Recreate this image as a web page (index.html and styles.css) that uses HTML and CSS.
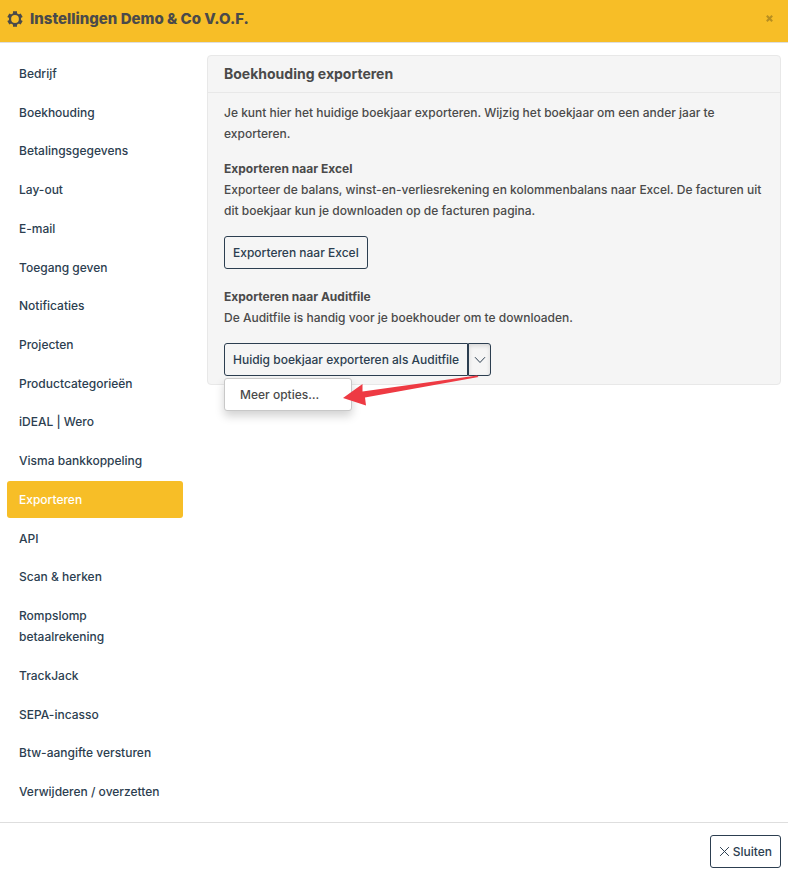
FILE: index.html
```html
<!DOCTYPE html>
<html lang="nl">
<head>
<meta charset="utf-8">
<meta name="viewport" content="width=device-width, initial-scale=1">
<title>Instellingen</title>
<link rel="stylesheet" href="styles.css">
</head>
<body>
<header class="header">
  <svg class="gear" viewBox="0 0 16 16" aria-hidden="true"><g fill="none" stroke="currentColor"><circle cx="8" cy="8" r="5" stroke-width="2.2"/><path stroke-width="4" d="M8 .3V3M8 13V15.700M1.330 4.150 3.670 5.500M12.330 10.500 14.670 11.850M1.330 11.850 3.670 10.500M12.330 5.500 14.670 4.150"/></g></svg>
  <h1 class="title">Instellingen Demo &amp; Co V.O.F.</h1>
  <button class="close" type="button" aria-label="Sluiten"><svg viewBox="0 0 6 6" aria-hidden="true"><path d="M.7.7 5.3 5.3M5.3.7.7 5.3" stroke="currentColor" stroke-width="1.8"/></svg></button>
</header>
<main class="main">
  <nav class="nav">
    <a href="#">Bedrijf</a>
    <a href="#">Boekhouding</a>
    <a href="#">Betalingsgegevens</a>
    <a href="#">Lay-out</a>
    <a href="#">E-mail</a>
    <a href="#">Toegang geven</a>
    <a href="#">Notificaties</a>
    <a href="#">Projecten</a>
    <a href="#">Productcategorieën</a>
    <a href="#">iDEAL | Wero</a>
    <a href="#">Visma bankkoppeling</a>
    <a href="#" class="active">Exporteren</a>
    <a href="#">API</a>
    <a href="#">Scan &amp; herken</a>
    <a href="#">Rompslomp<br>betaalrekening</a>
    <a href="#">TrackJack</a>
    <a href="#">SEPA-incasso</a>
    <a href="#">Btw-aangifte versturen</a>
    <a href="#">Verwijderen / overzetten</a>
  </nav>
  <section class="panel">
    <h2 class="panel-title">Boekhouding exporteren</h2>
    <div class="panel-body">
      <p class="intro">Je kunt hier het huidige boekjaar exporteren. Wijzig het boekjaar om een ander jaar te exporteren.</p>
      <h3>Exporteren naar Excel</h3>
      <p>Exporteer de balans, winst-en-verliesrekening en kolommenbalans naar Excel. De facturen uit dit boekjaar kun je downloaden op de facturen pagina.</p>
      <button class="btn excel" type="button">Exporteren naar Excel</button>
      <h3>Exporteren naar Auditfile</h3>
      <p>De Auditfile is handig voor je boekhouder om te downloaden.</p>
      <div class="group">
        <button class="btn audit" type="button">Huidig boekjaar exporteren als Auditfile</button>
        <button class="btn toggle" type="button" aria-label="Meer"><svg viewBox="0 0 12 8" aria-hidden="true"><path d="M1 1.2 6 6.5 11 1.2" fill="none" stroke="currentColor"/></svg></button>
        <div class="menu"><a href="#">Meer opties…</a></div>
        <svg class="arrow" viewBox="0 0 140 34" aria-hidden="true"><path fill="#ee3a43" d="M0 23 19.500 9V16.500L134 .5 135.500 2 22 22.500 23 30.500Z"/></svg>
      </div>
    </div>
  </section>
</main>
<footer class="footer">
  <button class="btn sluiten" type="button"><svg viewBox="0 0 10 10" aria-hidden="true"><path d="M1 1 9 9M9 1 1 9" stroke="currentColor" stroke-width=".9"/></svg>Sluiten</button>
</footer>
</body>
</html>
```

FILE: styles.css
```css
* { box-sizing: border-box; }
body {
  margin: 0;
  min-height: 100vh;
  display: flex;
  flex-direction: column;
  background: #fff;
  color: #4a4a4a;
  font: 500 12px/21px Inter, "Open Sans", sans-serif;
}
h1, h2, h3, p { margin: 0; }
a { color: #2c3e50; text-decoration: none; }
button { font: inherit; cursor: pointer; }
.header {
  display: flex;
  align-items: center;
  height: 43px;
  padding: 0 15px 5px 7px;
  background: #f7be27;
  border-bottom: 1px solid #dedede;
}
.gear { width: 16px; height: 16px; margin-right: 7px; }
.title { font-size: 15px; line-height: 21px; font-weight: 800; }
.close {
  margin-left: auto;
  padding: 0;
  border: 0;
  background: none;
  color: #b88f20;
  line-height: 0;
}
.close svg { width: 7px; height: 7px; }
.main {
  flex: 1;
  display: flex;
  align-items: stretch;
  gap: 24px;
  padding: 12px 7px;
}
.nav {
  flex: 0 0 176px;
  display: flex;
  flex-direction: column;
  justify-content: space-between;
}
.nav a { padding: 8px 12px; border-radius: 3px; }
.nav .active { background: #f7be27; color: #fff; }
.panel {
  flex: 1;
  align-self: flex-start;
  border: 1px solid #e8e8e8;
  border-radius: 4px;
  background: #f5f5f5;
}
.panel-title {
  padding: 8px 16px;
  border-bottom: 1px solid #e8e8e8;
  font-size: 14px;
  line-height: 20px;
  font-weight: 700;
}
.panel-body { padding: 9px 16px 8px; }
.intro { margin-bottom: 14px; }
h3 { font-size: 12px; line-height: 21px; font-weight: 700; }
.btn {
  height: 33px;
  padding: 0 8px;
  border: 1px solid #2c3e50;
  border-radius: 3px;
  background: transparent;
  color: #2c3e50;
  white-space: nowrap;
}
.excel { display: block; margin: 15px 0 17px; }
.group { position: relative; display: inline-flex; margin-top: 15px; vertical-align: top; }
.audit { border-radius: 3px 0 0 3px; }
.toggle {
  width: 23px;
  padding: 0 5px;
  border-radius: 0 3px 3px 0;
  box-shadow: inset 0 2px 4px #00000020;
}
.toggle svg { display: block; width: 12px; height: 8px; }
.menu {
  position: absolute;
  top: 35px;
  left: 0;
  width: 128px;
  padding: 5px 15px;
  border: 1px solid #c8c8c8;
  border-radius: 3px;
  background: #fff;
  box-shadow: 0 5px 10px #0000002e;
}
.menu a { color: #4a4a4a; }
.arrow {
  position: absolute;
  top: 32px;
  right: 8px;
  width: 140px;
  height: 34px;
}
.footer {
  display: flex;
  justify-content: flex-end;
  padding: 12px 7px 8px;
  border-top: 1px solid #dedede;
}
.sluiten { display: flex; align-items: center; gap: 3px; }
.sluiten svg { width: 11px; height: 11px; }
```
